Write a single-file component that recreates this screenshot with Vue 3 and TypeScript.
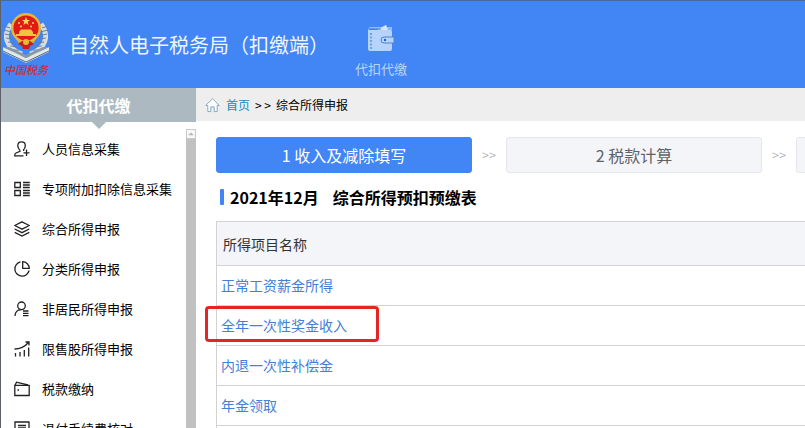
<script setup lang="ts">
interface MenuItem {
  label: string
  icon: string[]
}

const menu: MenuItem[] = [
  {
    label: '人员信息采集',
    icon: [
      'M6 9.5C4.4 7.8 3.8 5.900 3.800 4.400C3.800 2 5.200.8 7.500.8S11.300 2 11.300 4.400C11.300 5.900 10.700 7.600 9.500 8.900L9.700 10',
      'M6 9.500V10.300L2 12C1 12.500.7 13.300.7 14.800H9.500',
      'M12.500 8.500V15M9.500 11.800H15.500',
    ],
  },
  {
    label: '专项附加扣除信息采集',
    icon: ['M.8 1.500H6.300V6.500H.8ZM.8 9.500H6.300V14.500H.8Z', 'M9 1.500H15.800M9 4H15.800M9 6.500H15.800M9 9.500H15.800M9 12H15.800M9 14.500H15.800'],
  },
  {
    label: '综合所得申报',
    icon: ['M8 .8L15.300 4.500L8 8.200L.7 4.500Z', 'M.7 8L8 11.700L15.300 8', 'M.7 11.300L8 15L15.300 11.300'],
  },
  {
    label: '分类所得申报',
    icon: ['M6.500.9A7.200 7.200 0 1 0 15.100 9.500', 'M8.700.7V7.300H15.300A6.800 6.800 0 0 0 8.700.7Z'],
  },
  {
    label: '非居民所得申报',
    icon: ['M7.500 1A3.800 3.800 0 1 1 7.500 8.600A3.800 3.800 0 1 1 7.500 1Z', 'M1 15C1.200 11.300 3.500 8.800 7 8.600', 'M9 10H14.500M9 12.300H14.500M9 14.600H14.500'],
  },
  {
    label: '限售股所得申报',
    icon: ['M.5 8C6 8 11 5.500 14.500 1.500M11.500 1H15V4.500', 'M1.500 12V15.500M6 11V15.500M10.300 9V15.500M14.700 6.500V15.500'],
  },
  {
    label: '税款缴纳',
    icon: ['M.8 4.300H15.200V14.500H.8Z', 'M1.200 4L2.500 1.200L14 4', 'M3.500 9H5'],
  },
  {
    label: '退付手续费核对',
    icon: ['M1 1H15V15H1Z', 'M4 4.500H12M4 7H12M4 9.500H9'],
  },
]

const steps: string[] = ['1 收入及减除填写', '2 税款计算', '']

const incomes: string[] = ['正常工资薪金所得', '全年一次性奖金收入', '内退一次性补偿金', '年金领取', '']
const marked = '全年一次性奖金收入'
const laurel: number[] = [0, 1, 2, 3, 4, 5, 6]
</script>

<template>
  <div class="app">
    <header class="top">
      <div class="logo">
        <svg class="emblem" viewBox="0 0 48 50" aria-hidden="true">
          <g fill="none" stroke="#d5dde3" stroke-width="5">
            <path d="M9 11C1 22 3 35 20 41" />
            <path d="M39 11C47 22 45 35 28 41" />
          </g>
          <g stroke="#6b7f92" stroke-width="1">
            <path v-for="n in laurel" :key="n" :d="`M${2 + n * n * 0.25} ${13 + n * 4}l6 ${2 - n * 0.3}`" />
            <path v-for="n in laurel" :key="'r' + n" :d="`M${46 - n * n * 0.25} ${13 + n * 4}l-6 ${2 - n * 0.3}`" />
          </g>
          <path d="M1 34L24 45L47 34V39L24 50L1 39Z" fill="#e2e7ea" />
          <path d="M1 38L24 49L47 38" fill="none" stroke="#5c6875" />
          <path d="M1 34L7 34L24 42L41 34H47L24 45Z" fill="#8798a5" />
          <path d="M14 26H34L31 31H17Z" fill="#d8a928" />
          <circle cx="24" cy="15" r="13.800" fill="#e01a18" stroke="#e6b739" stroke-width="2.400" />
          <path d="M24 4L25.200 7H28L25.800 8.800L26.600 12L24 10.200L21.400 12L22.200 8.800L20 7H22.800Z" fill="#ffd84b" />
          <g fill="#ffd84b">
            <circle cx="17" cy="10" r="1" /><circle cx="31" cy="10" r="1" />
            <circle cx="19" cy="13.500" r="1" /><circle cx="29" cy="13.500" r="1" />
          </g>
          <path d="M17 19L19 16.500H29L31 19V21H34V23H14V21H17Z" fill="#f5c33b" />
          <path d="M16 31L20 28H28L32 31L28 33L27 36H21L20 33Z" fill="#c81e1a" />
          <circle cx="24" cy="29" r="3" fill="#e9b936" />
        </svg>
        <span class="script">中国税务</span>
      </div>
      <h1>自然人电子税务局（扣缴端）</h1>
      <a class="module" href="#">
        <svg viewBox="0 0 28 28" aria-hidden="true">
          <path d="M2 4V3Q2 2 3 2H15L19 0L20 2H25V5Z" fill="#8fbcf8" />
          <path d="M10 5L19 0L21 5Z" fill="#d4e5fd" />
          <path d="M1 3Q1 5 3 5H24Q25 5 25 7V12H17Q14 12 14 15T17 18H25V24Q25 26 23 26H3Q1 26 1 24Z" fill="#b5d3fb" />
          <path d="M17 12H27V18H17Q14 18 14 15T17 12Z" fill="#b5d3fb" stroke="#4b84d8" />
          <circle cx="18" cy="15" r="1.200" fill="#2763bd" />
          <path d="M4 8V25" stroke="#4c87df" stroke-width="1.300" stroke-dasharray="2 1.500" />
          <path d="M2 4H14" stroke="#3474d5" />
        </svg>
        <span>代扣代缴</span>
      </a>
    </header>

    <div class="body">
      <aside class="side">
        <h2>代扣代缴</h2>
        <div class="scroller">
          <nav>
            <a v-for="item in menu" :key="item.label" href="#">
              <svg viewBox="0 0 16 16" aria-hidden="true">
                <path v-for="d in item.icon" :key="d" :d="d" />
              </svg>
              <span>{{ item.label }}</span>
            </a>
          </nav>
          <div class="track" aria-hidden="true">
            <svg viewBox="0 0 10 10"><path d="M1.500 6.500L5 3L8.500 6.500Z" /></svg>
          </div>
        </div>
      </aside>

      <main>
        <div class="crumbs">
          <svg viewBox="0 0 16 16" aria-hidden="true">
            <path d="M.8 8.500L8 1.200L15.200 8.500H13V15H9.800V10H6.200V15H3V8.500Z" />
          </svg>
          <a href="#">首页</a>
          <span class="sep">&gt; &gt;</span>
          <span>综合所得申报</span>
        </div>

        <section class="content">
          <div class="steps">
            <template v-for="(step, i) in steps" :key="i">
              <span v-if="i > 0" class="arrow">&gt;&gt;</span>
              <button type="button" :class="{ active: i === 0 }">{{ step }}</button>
            </template>
          </div>

          <h3><span>2021年12月</span><span>综合所得预扣预缴表</span></h3>

          <table>
            <thead>
              <tr><th scope="col">所得项目名称</th></tr>
            </thead>
            <tbody>
              <tr v-for="name in incomes" :key="name">
                <td :class="{ marked: name === marked }">
                  <a v-if="name" href="#">{{ name }}</a>
                </td>
              </tr>
            </tbody>
          </table>
        </section>
      </main>
    </div>
  </div>
</template>

<style>
body {
  overflow: hidden;
}
</style>

<style scoped>
.app,
.app *,
.app *::after {
  box-sizing: border-box;
}

.app {
  display: flex;
  flex-direction: column;
  height: 100vh;
  overflow: hidden;
  border-top: 1px solid #4c68a0;
  border-left: 1px solid #5c6067;
  background: #fff;
  color: #000;
  font-family: "Noto Sans CJK SC", sans-serif;
}

a {
  text-decoration: none;
}

h1,
h2,
h3 {
  margin: 0;
}

.top {
  display: flex;
  flex: none;
  align-items: center;
  height: 87px;
  background: #4285f4;
}

.logo {
  display: flex;
  flex-direction: column;
  align-items: center;
  width: 50px;
  margin-right: 18px;
}

.emblem {
  width: 48px;
  height: 50px;
}

.script {
  color: #d22a3c;
  font-family: "Liberation Serif", "Noto Sans CJK SC", serif;
  font-size: 11px;
  font-style: italic;
  font-weight: 500;
  line-height: 14px;
}

h1 {
  color: #eef5ff;
  font-size: 20px;
  font-weight: 400;
  line-height: 28px;
  white-space: nowrap;
}

.module {
  display: flex;
  flex-direction: column;
  align-items: center;
  gap: 6px;
  margin-left: 26px;
  padding-top: 14px;
  color: #b9d6fd;
  font-size: 13px;
  line-height: 20px;
}

.module svg {
  width: 28px;
  height: 28px;
}

.body {
  display: flex;
  flex: 1;
  min-height: 0;
}

.side {
  display: flex;
  flex: none;
  flex-direction: column;
  width: 195px;
}

h2 {
  position: relative;
  flex: none;
  height: 34px;
  background: #acb9c1;
  color: #fff;
  font-size: 16px;
  font-weight: 700;
  line-height: 34px;
  text-align: center;
}

h2::after {
  position: absolute;
  top: 100%;
  left: 50%;
  border: 7px solid transparent;
  border-top-color: #acb9c1;
  border-bottom: 0;
  content: "";
  transform: translateX(-50%);
}

.scroller {
  display: flex;
  flex: 1;
  min-height: 0;
  padding-top: 7px;
}

nav {
  flex: 1;
  overflow: hidden;
}

nav a {
  display: flex;
  align-items: center;
  gap: 12px;
  height: 40px;
  padding-left: 13px;
  color: #000;
  font-size: 13px;
  line-height: 20px;
  white-space: nowrap;
}

nav svg {
  flex: none;
  width: 16px;
  height: 16px;
  fill: none;
  stroke: #222;
  stroke-width: 1.3;
}

.track {
  width: 10px;
  background: #c1c0c3;
}

.track svg {
  display: block;
  width: 10px;
  height: 10px;
  border: 1px solid #c9c9c9;
  background: #f8f8f8;
  fill: #b5b5b5;
}

main {
  flex: 1;
  min-width: 0;
}

.crumbs {
  display: flex;
  align-items: center;
  height: 33px;
  padding-left: 9px;
  background: #eee;
  font-size: 12px;
  line-height: 20px;
}

.crumbs svg {
  width: 15px;
  height: 16px;
  margin-right: 6px;
  fill: #fff;
  stroke: #7ba9bd;
}

.crumbs a {
  color: #168bc0;
}

.sep {
  margin: 0 5px;
}

.content {
  padding: 16px 0 0 20px;
}

.steps {
  display: flex;
  overflow: hidden;
}

.steps button {
  flex: none;
  width: 256px;
  height: 36px;
  padding: 0;
  border: 1px solid #e6e7ea;
  border-radius: 3px;
  background: #f4f5f8;
  color: #5f6369;
  font-family: inherit;
  font-size: 16px;
  line-height: 34px;
}

.steps button.active {
  border-color: #4285f4;
  background: #4285f4;
  color: #fff;
}

.arrow {
  flex: none;
  width: 34px;
  color: #a5a5a5;
  font-size: 13px;
  font-weight: 300;
  line-height: 36px;
  text-align: center;
}

h3 {
  display: flex;
  align-items: center;
  gap: 14px;
  height: 48px;
  padding-left: 4px;
  font-size: 16px;
  font-weight: 700;
  white-space: nowrap;
}

h3::before {
  width: 4px;
  height: 16px;
  margin-right: -8px;
  border-radius: 1px;
  background: #4285f4;
  content: "";
}

table {
  width: 100%;
  border-collapse: collapse;
  font-size: 14px;
  line-height: 20px;
}

th,
td {
  height: 40px;
  padding: 0 0 2px 4px;
  border: 1px solid #d2d2d4;
  border-right: 0;
  text-align: left;
}

th {
  height: 44px;
  padding: 0 0 0 6px;
  background: #f4f5f8;
  color: #333;
  font-weight: 400;
}

td a {
  color: #4380d6;
}

.marked {
  position: relative;
}

.marked::after {
  position: absolute;
  top: 0;
  left: -12px;
  width: 174px;
  height: 36px;
  border: 3px solid #e42620;
  border-radius: 4px;
  content: "";
  pointer-events: none;
}
</style>
